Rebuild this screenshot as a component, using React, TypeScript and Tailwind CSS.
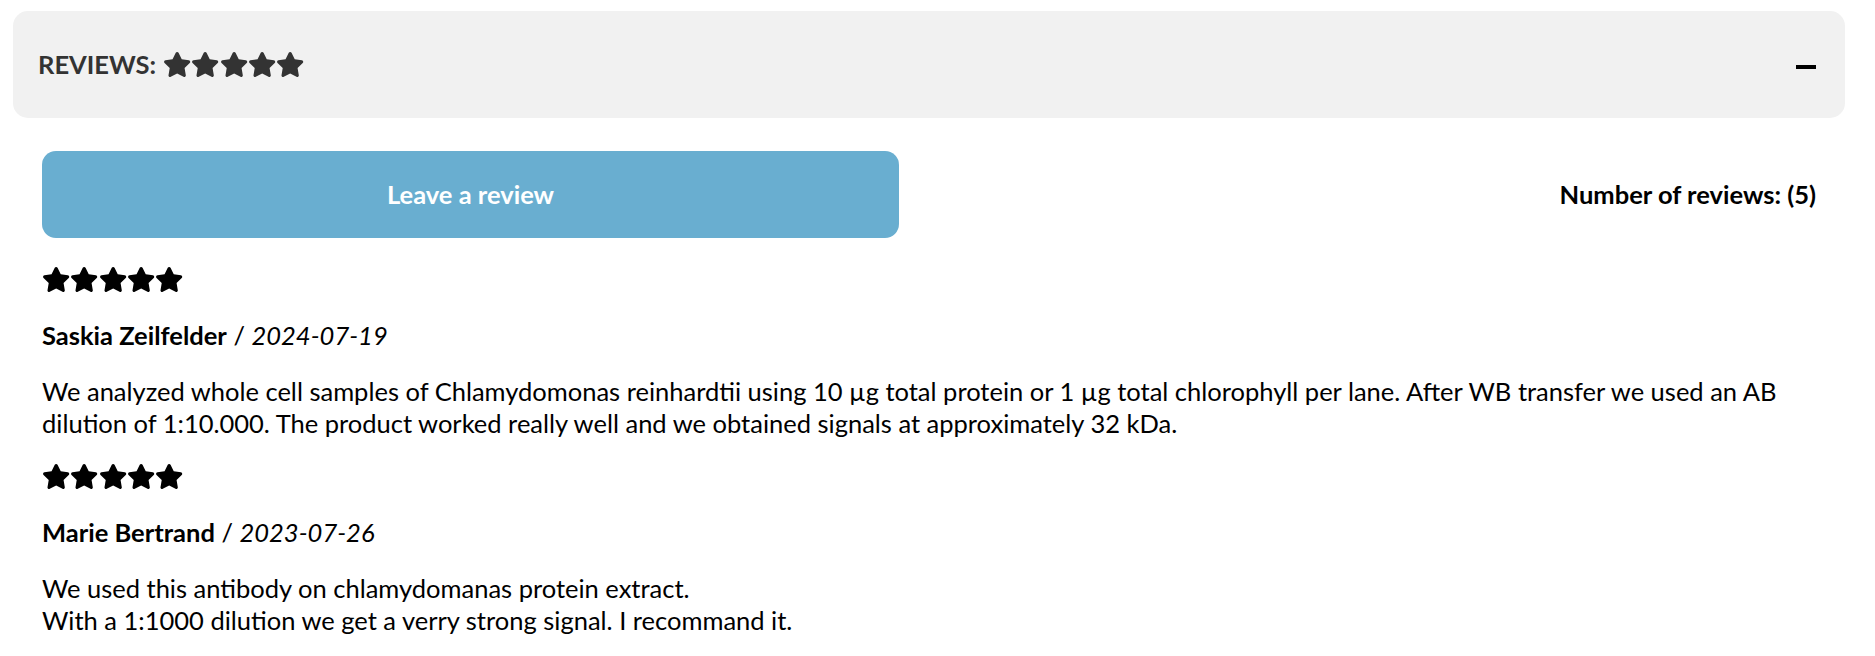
import React from "react";

const STAR =
  "M259.3 17.8L194 150.2 47.9 171.5c-26.2 3.8-36.7 36.1-17.7 54.6l105.7 103-25 145.5c-4.5 26.3 23.2 46 46.4 33.7L288 439.6l130.7 68.7c23.2 12.2 50.9-7.4 46.4-33.7l-25-145.5 105.7-103c19-18.5 8.5-50.8-17.7-54.6L382 150.2 316.7 17.8c-11.7-23.6-45.6-23.9-57.4 0z";

function Stars({ color }: { color: string }) {
  return (
    <div className="flex items-center">
      {[0, 1, 2, 3, 4].map((i) => (
        <svg key={i} viewBox="0 0 576 512" className="w-[28.3px] h-[25px] block" fill={color}>
          <path d={STAR} />
        </svg>
      ))}
    </div>
  );
}

function Review({ name, date, lines }: { name: string; date: string; lines: string[] }) {
  return (
    <div className="pb-[25px]">
      <Stars color="#000000" />
      <div className="mt-[27px] leading-[32px] text-black">
        <span className="font-bold">{name}</span> / <span className="italic">{date}</span>
      </div>
      <div className="mt-[24px] leading-[32px] text-black">
        {lines.map((l, i) => (
          <React.Fragment key={i}>
            {l}
            {i < lines.length - 1 && <br />}
          </React.Fragment>
        ))}
      </div>
    </div>
  );
}

export default function App() {
  return (
    <div
      className="bg-white w-[1875px] min-h-[656px] pt-[11px] text-[25.5px]"
      style={{ fontFamily: "Lato, 'Open Sans', sans-serif" }}
    >
      <div className="ml-[13px] w-[1832px] h-[107px] bg-[#f1f1f1] rounded-[15px] flex items-center justify-between pl-[25px] pr-[29px]">
        <div className="flex items-center gap-[7px]">
          <span className="font-bold text-[25.5px] text-[#333333]">REVIEWS:</span>
          <Stars color="#333333" />
        </div>
        <div className="w-[20px] h-[4px] bg-black mt-[4px]" />
      </div>

      <div className="ml-[42px] w-[1774px]">
        <div className="mt-[33px] flex items-center justify-between">
          <button className="w-[857px] h-[87px] rounded-[14px] bg-[#69aed0] text-white font-bold flex items-center justify-center">
            Leave a review
          </button>
          <div className="font-bold text-black">Number of reviews: (5)</div>
        </div>

        <div className="mt-[29px]">
          <Review
            name="Saskia Zeilfelder"
            date="2024-07-19"
            lines={[
              "We analyzed whole cell samples of Chlamydomonas reinhardtii using 10 µg total protein or 1 µg total chlorophyll per lane. After WB transfer we used an AB dilution of 1:10.000. The product worked really well and we obtained signals at approximately 32 kDa.",
            ]}
          />
          <Review
            name="Marie Bertrand"
            date="2023-07-26"
            lines={[
              "We used this antibody on chlamydomanas protein extract.",
              "With a 1:1000 dilution we get a verry strong signal. I recommand it.",
            ]}
          />
        </div>
      </div>
    </div>
  );
}
